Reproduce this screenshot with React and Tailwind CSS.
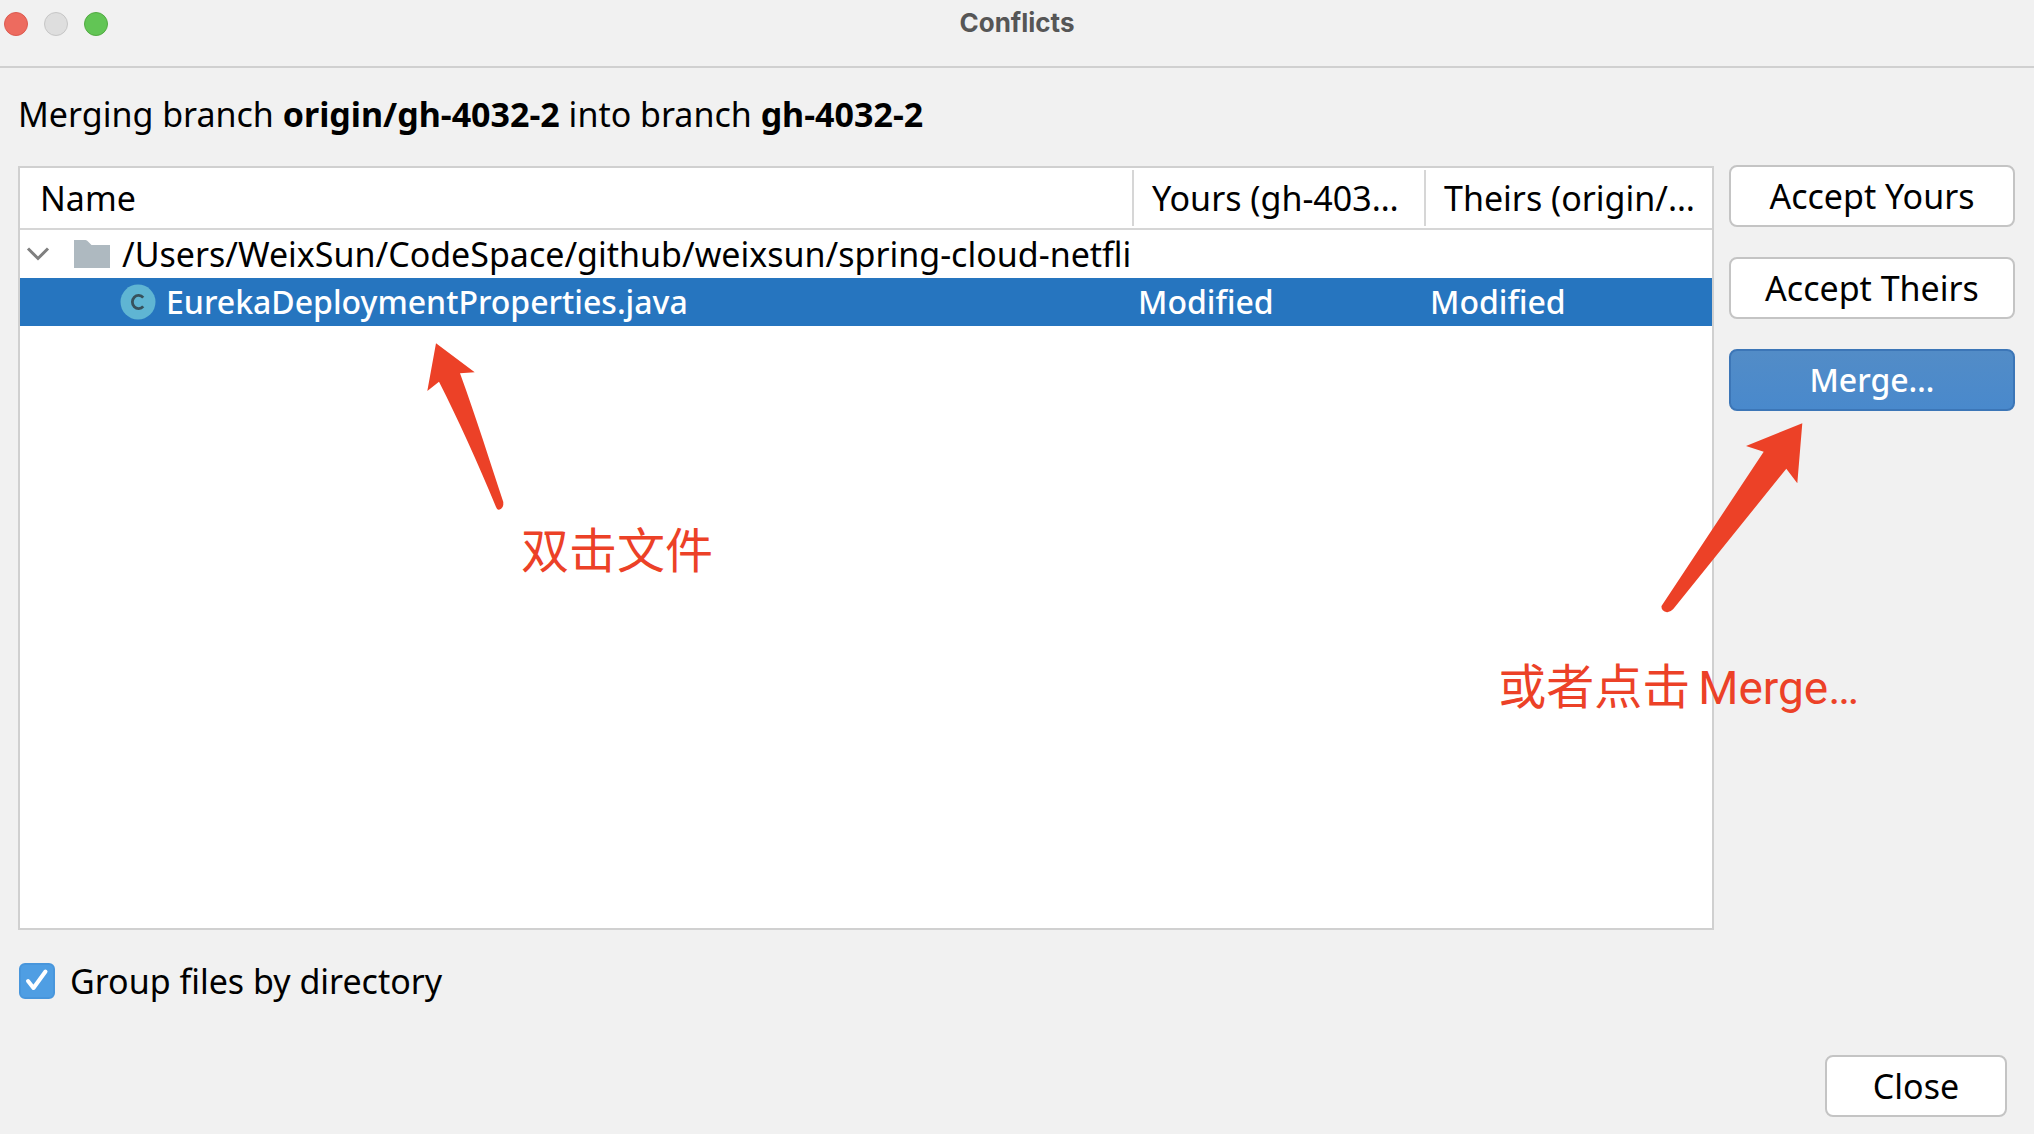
const uiFont = "font-['Noto_Sans','Noto_Sans_CJK_SC',sans-serif]";

function TitleBar() {
  return (
    <header className="relative flex h-[68px] items-start border-b-2 border-[#d0d0d0] px-1 pt-3">
      <div className="flex gap-4">
        <button type="button" aria-label="Close window" className="size-6 rounded-full border border-[#dc5a50] bg-[#ed6b5f]" />
        <button type="button" aria-label="Minimize window" className="size-6 rounded-full border border-[#c6c6c6] bg-[#dedede]" />
        <button type="button" aria-label="Zoom window" className="size-6 rounded-full border border-[#52aa42] bg-[#62c555]" />
      </div>
      <h1 className="absolute inset-x-0 top-[7px] text-center font-['Inter',sans-serif] text-[26px] leading-8 font-bold text-[#565656]">
        Conflicts
      </h1>
    </header>
  );
}

function ChevronIcon() {
  return (
    <svg className="h-4 w-6 shrink-0" viewBox="0 0 24 16" fill="none" stroke="#7f7f7f" strokeWidth="3" aria-hidden="true">
      <path d="M2 2.5 12 12.5 22 2.5" />
    </svg>
  );
}

function FolderIcon() {
  return (
    <svg className="h-7 w-9 shrink-0" viewBox="0 0 36 28" aria-hidden="true">
      <path d="M0 0H11.5Q13 0 14 1.5L17.5 5H36V28H0Z" fill="#aeb9c0" />
    </svg>
  );
}

function ClassIcon() {
  return (
    <svg className="size-9 shrink-0" viewBox="0 0 36 36" aria-hidden="true">
      <circle cx="18" cy="18" r="17.5" fill="#5fb5d3" />
      <path d="M23.2 13.6A6.2 6.6 0 1 0 23.2 22.4" fill="none" stroke="#37515c" strokeWidth="2.8" />
    </svg>
  );
}

function ColumnHeader({ children }) {
  return (
    <th scope="col" className="border-b-2 border-[#d6d6d6] p-0 text-left font-normal">
      <div className="flex h-14 items-center overflow-hidden border-l-2 border-[#d6d6d6] pl-[18px] whitespace-nowrap">
        {children}
      </div>
    </th>
  );
}

function ConflictTable() {
  return (
    <table className="w-full table-fixed border-separate border-spacing-0">
      <colgroup>
        <col />
        <col className="w-[292px]" />
        <col className="w-[288px]" />
      </colgroup>
      <thead>
        <tr className="h-[62px]">
          <th scope="col" className="border-b-2 border-[#d6d6d6] p-0 pl-5 text-left font-normal">Name</th>
          <ColumnHeader>Yours (gh-403…</ColumnHeader>
          <ColumnHeader>Theirs (origin/…</ColumnHeader>
        </tr>
      </thead>
      <tbody>
        <tr className="h-12">
          <td className="p-0">
            <div className="flex h-12 items-center overflow-hidden pl-1.5 whitespace-nowrap">
              <ChevronIcon />
              <span className="ml-6 flex items-center gap-3">
                <FolderIcon />
                /Users/WeixSun/CodeSpace/github/weixsun/spring-cloud-netfli
              </span>
            </div>
          </td>
          <td />
          <td />
        </tr>
        <tr className="h-12 bg-[#2675bf] text-[32px] font-medium text-white" aria-selected="true">
          <td className="p-0">
            <div className="flex h-12 items-center gap-2.5 pl-[100px] whitespace-nowrap">
              <ClassIcon />
              EurekaDeploymentProperties.java
            </div>
          </td>
          <td className="p-0 pl-1.5">Modified</td>
          <td className="p-0 pl-1.5">Modified</td>
        </tr>
      </tbody>
    </table>
  );
}

const plainButton = "h-[62px] rounded-lg border-2 border-[#c4c4c4] bg-white";

const noteText =
  "absolute text-[48px] leading-[56px] whitespace-nowrap text-[#ec4127] font-['Noto_Sans_CJK_SC',sans-serif]";

function Annotations() {
  return (
    <div className="pointer-events-none absolute inset-0">
      <svg className="absolute top-[176px] left-[400px] h-[170px] w-[90px]" viewBox="418 342 90 170" fill="#ec4127" aria-hidden="true">
        <path d="M436 343.3 474.7 372.3 460 373.3C477 420 490 462 503.3 502Q504 508.5 499 509.7 497 510 496 507C478 463 458 419 439 381.7L427.3 391Z" />
      </svg>
      <p className={`${noteText} top-[353px] left-[503px]`}>双击文件</p>
      <svg className="absolute top-[256px] right-[205px] h-[200px] w-[150px]" viewBox="1660 422 150 200" fill="#ec4127" aria-hidden="true">
        <path d="M1802.3 423.3 1797.3 483.3 1786.3 468.7 1673.3 609Q1670 612.5 1667 612.3 1661 611 1661.5 606L1763.7 451.7 1746 446Z" />
      </svg>
      <p className={`${noteText} top-[489px] right-[156px]`}>
        或者点击<span className="ml-2 font-['Roboto',sans-serif] text-[46px]">Merge…</span>
      </p>
    </div>
  );
}

export default function App() {
  return (
    <div className={`flex min-h-screen flex-col bg-[#f1f1f1] text-[34px] leading-[44px] text-black ${uiFont}`}>
      <TitleBar />
      <main className="flex flex-1 flex-col pr-[19px] pb-[17px] pl-[18px]">
        <p className="pt-6 pb-[30px]">
          Merging branch <b>origin/gh-4032-2</b> into branch <b>gh-4032-2</b>
        </p>
        <div className="relative flex flex-1 gap-[15px]">
          <div className="min-w-0 flex-1 border-2 border-[#d0d0d0] bg-white">
            <ConflictTable />
          </div>
          <div className="-mt-px flex w-[286px] flex-col gap-[30px]">
            <button type="button" className={plainButton}>Accept Yours</button>
            <button type="button" className={plainButton}>Accept Theirs</button>
            <button type="button" className="h-[62px] rounded-lg border-2 border-[#3c76b7] bg-linear-to-b from-[#528cc7] to-[#4989cc] text-[32px] font-medium text-white">
              Merge…
            </button>
          </div>
          <Annotations />
        </div>
        <label className="mt-[29px] flex items-center gap-[15px] self-start pl-px">
          <span className="relative size-9">
            <input type="checkbox" defaultChecked className="block size-9 appearance-none rounded-md border-2 border-[#4896dc] bg-[#4f9ee3]" />
            <svg className="pointer-events-none absolute inset-0 size-9" viewBox="0 0 36 36" fill="none" stroke="#fff" strokeWidth="4" strokeLinecap="round" strokeLinejoin="round" aria-hidden="true">
              <path d="M9 18 14.5 25 26.5 8.5" />
            </svg>
          </span>
          Group files by directory
        </label>
        <div className="mt-[52px] flex justify-end pr-2">
          <button type="button" className={`${plainButton} w-[182px]`}>Close</button>
        </div>
      </main>
    </div>
  );
}
